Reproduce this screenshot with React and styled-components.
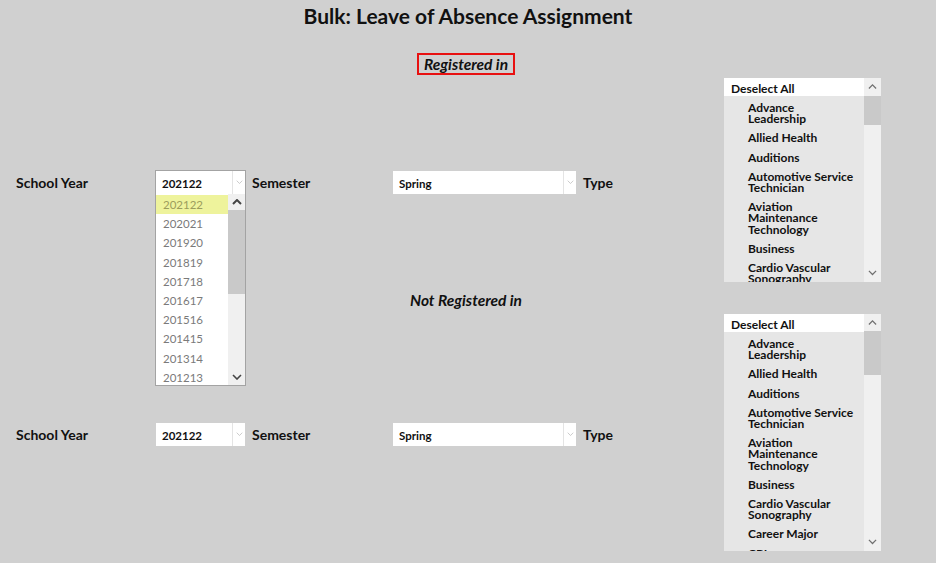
import React from "react";
import styled, { createGlobalStyle } from "styled-components";

const GlobalStyle = createGlobalStyle`
  html, body {
    margin: 0;
    padding: 0;
    background: #d0d0d0;
  }
  body {
    font-family: "Lato", "DejaVu Sans", sans-serif;
    color: #111;
  }
`;

const Page = styled.div`
  width: 936px;
  height: 563px;
  overflow: hidden;
  background: #d0d0d0;
`;

const Title = styled.h1`
  margin: 0;
  height: 32px;
  line-height: 32px;
  text-align: center;
  font-size: 21px;
  font-weight: 700;
  color: #111;
`;

const Section = styled.section`
  width: 932px;
  display: grid;
  grid-template-columns: 724px 157px 1fr;
  align-items: start;
`;

const Heading = styled.div`
  grid-column: 1 / -1;
  justify-self: center;
  margin-top: ${(p) => p.$top}px;
  height: 22px;
  box-sizing: border-box;
  padding: 0 5px;
  border: 2px solid ${(p) => (p.$boxed ? "#e81010" : "transparent")};
  line-height: 18px;
  font-size: 15.5px;
  font-weight: 700;
  font-style: italic;
`;

const FilterRow = styled.div`
  margin-top: ${(p) => p.$top}px;
  display: flex;
  align-items: center;
  height: 23px;
`;

const Label = styled.div`
  width: ${(p) => p.$width}px;
  padding-left: ${(p) => p.$pad || 0}px;
  box-sizing: border-box;
  flex-shrink: 0;
  font-size: 14px;
  font-weight: 700;
  white-space: nowrap;
`;

const Select = styled.div`
  position: relative;
  flex-shrink: 0;
  width: ${(p) => p.$width}px;
  height: 23px;
  display: flex;
  background: #fff;
  outline: ${(p) => (p.$open ? "1px solid #a3a3a3" : "none")};
`;

const SelectValue = styled.div`
  flex: 1;
  padding-left: 6px;
  line-height: 25px;
  font-size: 11.5px;
  font-weight: 700;
`;

const SelectArrow = styled.div`
  width: 12px;
  border-left: 1px solid #e4e4e4;
  display: flex;
  align-items: center;
  justify-content: center;
  color: #b5b5b5;
`;

const Popup = styled.div`
  position: absolute;
  top: 23px;
  left: -1px;
  right: -1px;
  height: 192px;
  display: flex;
  background: #fff;
  border: 1px solid #a3a3a3;
  border-top: none;
  box-sizing: border-box;
  z-index: 2;
`;

const Options = styled.div`
  flex: 1;
  padding-top: 1px;
`;

const Option = styled.div`
  height: 19.2px;
  line-height: 19px;
  padding-left: 7px;
  font-size: 11.5px;
  color: ${(p) => (p.$active ? "#9c9d5c" : "#7a7a7a")};
  background: ${(p) => (p.$active ? "#eef39c" : "transparent")};
`;

const Scrollbar = styled.div`
  width: 17px;
  flex-shrink: 0;
  display: flex;
  flex-direction: column;
  background: #f0f0f0;
  color: ${(p) => p.$arrow};
`;

const ScrollButton = styled.div`
  height: ${(p) => p.$h}px;
  flex-shrink: 0;
  display: flex;
  align-items: center;
  justify-content: center;
`;

const ScrollTrack = styled.div`
  flex: 1;
`;

const Thumb = styled.div`
  height: ${(p) => p.$h}px;
  background: #c9c9c9;
`;

const Slicer = styled.div`
  grid-column: 2;
  margin-top: 3px;
  height: ${(p) => p.$height}px;
  display: flex;
  overflow: hidden;
`;

const SlicerBody = styled.div`
  flex: 1;
  background: #e6e6e6;
  overflow: hidden;
`;

const SlicerHeader = styled.div`
  height: 18px;
  line-height: 21px;
  padding-left: 7px;
  background: #fff;
  font-size: 12px;
  font-weight: 700;
`;

const SlicerItems = styled.div`
  padding-top: 2px;
`;

const SlicerItem = styled.div`
  padding: 4px 4px 4px 24px;
  font-size: 12px;
  font-weight: 700;
  line-height: 11.2px;
  span {
    display: block;
    white-space: nowrap;
  }
`;

const Chevron = ({ up, size = 9, weight = 1.6 }) => (
  <svg width={size} height={size * 0.6} viewBox="0 0 10 6">
    <path
      d={up ? "M1 5 L5 1 L9 5" : "M1 1 L5 5 L9 1"}
      fill="none"
      stroke="currentColor"
      strokeWidth={weight}
    />
  </svg>
);

const years = [
  "202122",
  "202021",
  "201920",
  "201819",
  "201718",
  "201617",
  "201516",
  "201415",
  "201314",
  "201213",
];

const programs = [
  ["Advance", "Leadership"],
  ["Allied Health"],
  ["Auditions"],
  ["Automotive Service", "Technician"],
  ["Aviation", "Maintenance", "Technology"],
  ["Business"],
  ["Cardio Vascular", "Sonography"],
  ["Career Major"],
  ["CBL"],
];

const Dropdown = ({ value, width, open }) => (
  <Select $width={width} $open={open}>
    <SelectValue>{value}</SelectValue>
    <SelectArrow>
      <Chevron size={7} weight={1} />
    </SelectArrow>
    {open && (
      <Popup>
        <Options>
          {years.map((y) => (
            <Option key={y} $active={y === value}>
              {y}
            </Option>
          ))}
        </Options>
        <Scrollbar $arrow="#444">
          <ScrollButton $h={16}>
            <Chevron up size={10} weight={2} />
          </ScrollButton>
          <ScrollTrack>
            <Thumb $h={84} />
          </ScrollTrack>
          <ScrollButton $h={16}>
            <Chevron size={10} weight={1.6} />
          </ScrollButton>
        </Scrollbar>
      </Popup>
    )}
  </Select>
);

const Filters = ({ top, open }) => (
  <FilterRow $top={top}>
    <Label $width={156} $pad={16}>
      School Year
    </Label>
    <Dropdown value="202122" width={89} open={open} />
    <Label $width={148} $pad={7}>
      Semester
    </Label>
    <Dropdown value="Spring" width={183} />
    <Label $width={60} $pad={7}>
      Type
    </Label>
  </FilterRow>
);

const ProgramSlicer = ({ height, thumbTop, thumbHeight }) => (
  <Slicer $height={height}>
    <SlicerBody>
      <SlicerHeader>Deselect All</SlicerHeader>
      <SlicerItems>
        {programs.map((lines) => (
          <SlicerItem key={lines.join(" ")}>
            {lines.map((l) => (
              <span key={l}>{l}</span>
            ))}
          </SlicerItem>
        ))}
      </SlicerItems>
    </SlicerBody>
    <Scrollbar $arrow="#707070">
      <ScrollButton $h={thumbTop}>
        <Chevron up size={9} weight={1.4} />
      </ScrollButton>
      <ScrollTrack>
        <Thumb $h={thumbHeight} />
      </ScrollTrack>
      <ScrollButton $h={18}>
        <Chevron size={9} weight={1.4} />
      </ScrollButton>
    </Scrollbar>
  </Slicer>
);

export default function App() {
  return (
    <Page>
      <GlobalStyle />
      <Title>Bulk: Leave of Absence Assignment</Title>
      <Section>
        <Heading $top={21} $boxed>
          Registered in
        </Heading>
        <Filters top={96} open />
        <ProgramSlicer height={204} thumbTop={18} thumbHeight={29} />
      </Section>
      <Section>
        <Heading $top={7}>Not Registered in</Heading>
        <Filters top={112} />
        <ProgramSlicer height={237} thumbTop={17} thumbHeight={44} />
      </Section>
    </Page>
  );
}
